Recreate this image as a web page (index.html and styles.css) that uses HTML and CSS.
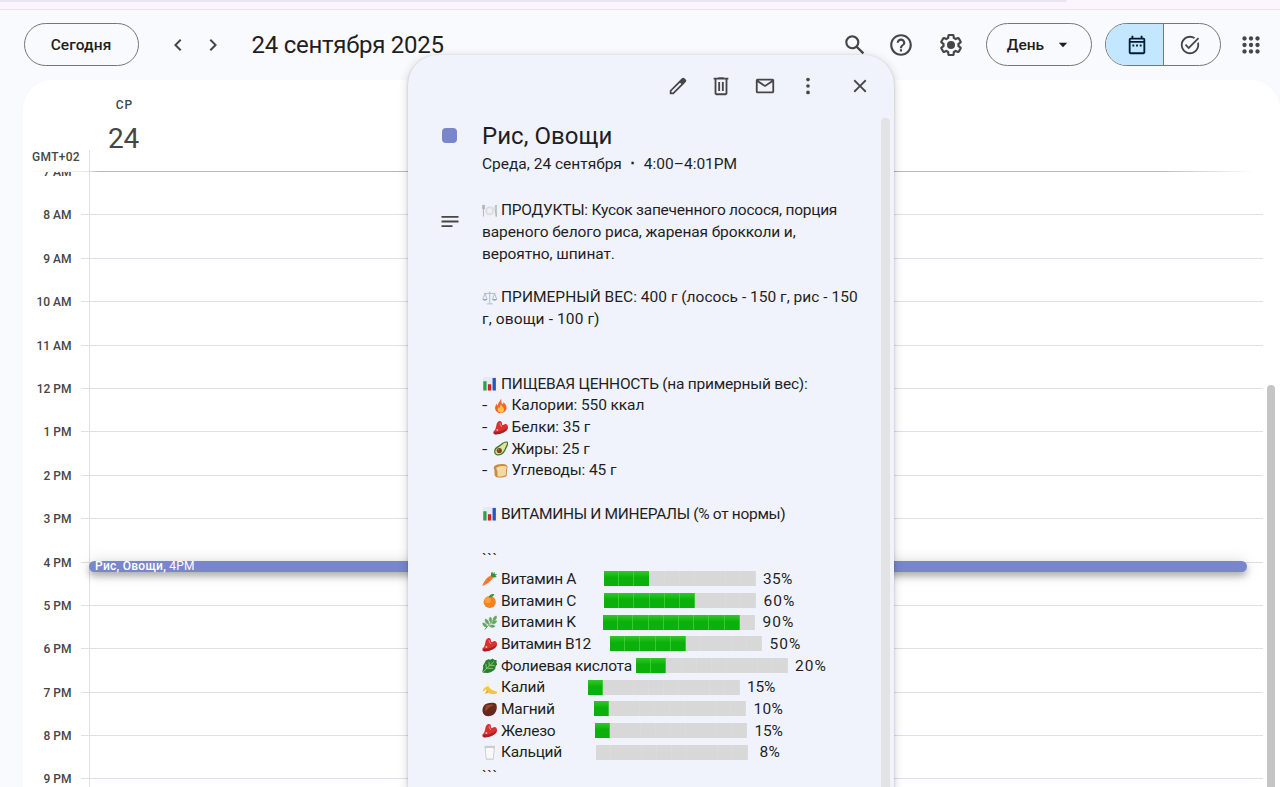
FILE: index.html
```html
<!DOCTYPE html>
<html lang="ru">
<head>
<meta charset="utf-8">
<title>24 сентября 2025</title>
<link rel="stylesheet" href="styles.css">
</head>
<body>
<svg class="defs" aria-hidden="true">
  <symbol id="plate" viewBox="0 0 16 16"><circle cx="8" cy="8" r="5" fill="#e1e3e6"/><circle cx="8" cy="8" r="3.2" fill="#eef0f2" stroke="#ccd0d4" stroke-width=".6"/><path d="M1.5 2v12M.7 2v4h1.800V2M14.700 14V2c-1.300 1-1.600 4-.8 6z" fill="none" stroke="#a9adb0" stroke-width=".9"/></symbol>
  <symbol id="scales" viewBox="0 0 16 16"><path d="M8 1.500v12M2.500 3.500h11M5 14.300h6M3 3.500L.9 9.400M3 3.500l2.200 5.900M13 3.500l-2.200 5.900M13 3.500l2.100 5.900" fill="none" stroke="#a9b4c2" stroke-width=".9"/><path d="M.5 9.400h5c-.4 2.300-4.600 2.300-5 0zM10.500 9.400h5c-.4 2.300-4.600 2.300-5 0z" fill="#94a4b7"/></symbol>
  <symbol id="chart" viewBox="0 0 16 16"><path d="M1 1h13.500v14H1z" fill="#e5eaf0"/><path d="M1.300 5.500h3.400V15H1.300z" fill="#29a34c"/><path d="M6.100 8.500h3.400V15H6.100z" fill="#c9252b"/><path d="M10.900 2h3.400v13h-3.400z" fill="#2258bd"/></symbol>
  <symbol id="fire" viewBox="0 0 16 16"><path d="M8.300.5c.8 3-.5 4 1.700 5.700 1-.8 1-1.500.8-2.200 2.600 2.500 4 5.400 2.700 8.200-1.800 4.300-9.500 4.400-11 .1-1-3 .3-5.100 1.500-6.700.1 1.100.3 1.900 1 2.400C4.600 5 7.400 3.700 8.300.5z" fill="#f5642c"/><path d="M8.300 6c.3 2.700 3.200 3.500 3 6.300-.4 3.700-6.100 3.600-6.500.2-.1-1.700.7-2.600 1.400-3.400.3.7.6 1 1 1.200C6.700 8.500 8 7.600 8.300 6z" fill="#ffc642"/></symbol>
  <symbol id="meat" viewBox="0 0 16 16"><path d="M5.500 1.500C8 .5 9.500 1.600 9.300 5c1.500.8 2.500-1.700 4.500-.7 2.500 1.500 2 4.500.3 6.200-2.500 2.600-8.600 4.600-12 4.300-2.500-.4-2-3.300-.4-4.300C3.700 8.700 3 2.700 5.500 1.500z" fill="#d9312f"/><path d="M1 12.300c4.500.2 10-1.200 14.200-4.300-.4 4-7.400 6.900-12.700 6.900-1.300 0-1.900-1.200-1.500-2.600z" fill="#a81f25"/><path d="M6.700 3c1.200.3.7 3.300 2.500 4" fill="none" stroke="#f3a19a" stroke-width=".9"/><circle cx="4.500" cy="10.300" r="1" fill="#f0b5ab"/></symbol>
  <symbol id="avocado" viewBox="0 0 16 16"><path d="M15.200.7c1.500 2.600-.6 4.900-1.700 7.600-1.500 4.300-4.900 7.300-9.200 6.600C-.1 13.700.3 7.900 4.200 5.800 7.300 4.300 10.900-.8 15.200.7z" fill="#48762d"/><path d="M14.200 1.600c.8 1.700-.8 3.500-1.800 6-1.400 3.900-4.400 6.700-7.700 6-3.400-1-2.700-5.200.5-6.700 3.400-1.600 6-6 9-5.300z" fill="#dee59a"/><circle cx="6.500" cy="9.900" r="2.700" fill="#754722"/><circle cx="5.700" cy="9.100" r=".8" fill="#b78452"/></symbol>
  <symbol id="bread" viewBox="0 0 16 16"><path d="M1.500 3C3.500.8 11.500.2 13.800 2c1.600 1 1.400 3 .8 4l-.5 7.500c-2.500 1.500-8 2-10.500 1.200L1.700 13l-.3-6C.5 5.500.5 4 1.500 3z" fill="#c98b45"/><path d="M4.200 4.500c3-1.700 7.800-1.800 9.600-.8 1 1 .5 2-.3 2.700l-.3 6.300c-2 1-6.200 1.400-8.500 1.200L4.500 8C3.300 7 2.900 5.400 4.200 4.500z" fill="#f4d9a1"/></symbol>
  <symbol id="carrot" viewBox="0 0 16 16"><path d="M9.300 4.300c1.700.2 2.500 1.300 2.500 2.700C9 10.700 4.800 14 1 15.300.4 15.400.2 15 .5 14.500 2 10.500 5.500 6 9.300 4.300z" fill="#f37b34"/><path d="M9.500 5.500C9 3.500 9.300 1.500 10.500.5l.9 2.300L13 .8l.1 2.600 2.700-.3-2 1.900 1.500 1.300c-1.700.6-3.600.8-5.800-.8z" fill="#36913a"/><path d="M6 8.500l1.500 1.200M4 11.500l1 .7" stroke="#c85319" stroke-width=".7"/></symbol>
  <symbol id="orange" viewBox="0 0 16 16"><circle cx="8" cy="9.300" r="6.300" fill="#f48220"/><circle cx="6" cy="7.500" r="3" fill="#ffa13b"/><path d="M7 4.500C7.500 2 10 .5 12.700 1.300 12 3.500 10 4.700 7 4.500z" fill="#3f8f35"/></symbol>
  <symbol id="herb" viewBox="0 0 16 16"><path d="M3 15C5.500 11.500 9 8 13.500 3.500" fill="none" stroke="#51964b"/><path d="M14.800 1c.5 3-.7 4.500-3.200 4.600C11.400 3.200 12.300 1.600 14.800 1zM8.500 2c1.800 1.700 2 3.600.7 5.500C7 6 7 4 8.500 2zM3.400 4.200c2.700.7 3.800 2.500 3.500 5.300C4.200 9 3 7 3.400 4.200zM.8 8.200c2.800 0 4 1.600 4.200 4.200C2.500 12.400.9 10.900.8 8.200zM15.300 6.300c-1 2.400-2.800 3.200-5.300 2.200 1.200-2.200 3-2.900 5.300-2.200zM13.500 11.700c-2.100 1.600-4.300 1.300-6-.5 2-1.400 4.200-1.300 6 .5z" fill="#64a75b" stroke="#64a75b" stroke-width=".7"/></symbol>
  <symbol id="greens" viewBox="0 0 16 16"><path d="M4 2.500L6.500 1.300l2 .5L11 .5l1.500 1.200 2.700.5-.3 2.600.8 1.700-1.700 2.300-.3 2.200-2 2.200-2.700 1.600-3 .7L1 15.300.3 14l.9-3.500L1 8l1.200-2z" fill="#29812f"/><path d="M1 14.600L12.500 3.500M4.500 11L4 6M7.500 8.200L7.200 4M5.500 10.500l5.500.3M8.500 7.500l4.500.3" fill="none" stroke="#a6cf7c" stroke-width=".9"/></symbol>
  <symbol id="banana" viewBox="0 0 16 16"><path d="M4.500.7c1.500 2.800 3 4.200 4.600 5.500L7 9C4.500 6.500 3.500 4 4.500.7z" fill="#fff0c3"/><path d="M6.500 6.500c1.500 3 5 4.800 9 5.500.3 1.200-.4 2-1.500 2.300-5.200.9-9-1.500-10-4.800-1 1.300-2 2-3.400 2.200C1.500 8.800 3.500 6.500 6.500 6.500z" fill="#f4c63d"/><path d="M2 13.800c1.500-.5 2.500-1.300 3-3l1.500 1.500c-1 1.300-2.500 2-4.500 1.500z" fill="#dba62c"/></symbol>
  <symbol id="chestnut" viewBox="0 0 16 16"><path d="M4.500 1.800C8 .5 13 .3 14.600 2c1.500 3.500.5 8.500-2.600 11-3.500 2.500-8.500 2.500-10.600-.8C-.5 9 .5 3.500 4.500 1.800z" fill="#66291c"/><path d="M5 3.300c2.500-1 6-1 7.500 0-3 .7-6.500 2.700-8.500 6.500-1.300-2-.8-5.200 1-6.500z" fill="#98452d"/></symbol>
  <symbol id="milk" viewBox="0 0 16 16"><path d="M2.500.8h11L12 15.200H4z" fill="#c9ced2"/><path d="M3.800 4h8.400l-1 10H4.800z" fill="#f8f8f8"/><ellipse cx="8" cy="4" rx="4.200" ry=".9" fill="#fff"/></symbol>
</svg>

<div class="browser-edge"><div class="omnibox"></div></div>

<header class="topbar">
  <button class="pill today">Сегодня</button>
  <svg class="chev prev" viewBox="0 0 24 24"><path d="M15.410 7.410L14 6l-6 6 6 6 1.410-1.410L10.830 12z"/></svg>
  <svg class="chev" viewBox="0 0 24 24"><path d="M8.590 16.590L10 18l6-6-6-6-1.410 1.410L13.170 12z"/></svg>
  <h1 class="period">24 сентября 2025</h1>
  <div class="tools">
    <svg class="tool" viewBox="0 0 24 24"><path d="M20.490 19l-5.730-5.730C15.530 12.200 16 10.910 16 9.500A6.500 6.500 0 1 0 9.500 16c1.410 0 2.700-.47 3.770-1.240L19 20.490 20.490 19zM5 9.500C5 7.010 7.010 5 9.500 5S14 7.010 14 9.500 11.990 14 9.500 14 5 11.990 5 9.500z"/></svg>
    <svg class="tool help" viewBox="0 0 24 24"><path d="M11 18h2v-2h-2v2zm1-16C6.480 2 2 6.480 2 12s4.480 10 10 10 10-4.480 10-10S17.520 2 12 2zm0 18c-4.410 0-8-3.590-8-8s3.590-8 8-8 8 3.590 8 8-3.590 8-8 8zm0-14c-2.210 0-4 1.790-4 4h2c0-1.100.9-2 2-2s2 .9 2 2c0 2-3 1.750-3 5h2c0-2.250 3-2.500 3-5 0-2.210-1.790-4-4-4z"/></svg>
    <svg class="tool" viewBox="0 0 24 24"><path d="M13.850 22.250h-3.700c-.74 0-1.360-.54-1.450-1.270l-.27-1.890c-.27-.14-.53-.29-.79-.46l-1.800.72c-.7.26-1.470-.03-1.810-.65L2.200 15.530c-.35-.66-.2-1.440.36-1.880l1.530-1.190c-.01-.15-.02-.3-.02-.46 0-.15.010-.31.020-.46l-1.520-1.190c-.59-.45-.74-1.260-.37-1.880l1.850-3.190c.34-.62 1.110-.9 1.790-.63l1.810.73c.26-.17.52-.32.78-.46l.27-1.910c.09-.7.710-1.250 1.440-1.250h3.700c.74 0 1.360.54 1.450 1.270l.27 1.890c.27.14.53.29.79.46l1.800-.72c.71-.26 1.480.03 1.820.65l1.840 3.180c.36.66.2 1.440-.36 1.880l-1.520 1.190c.01.15.02.3.02.46s-.01.31-.02.46l1.520 1.190c.56.45.72 1.230.37 1.860l-1.860 3.220c-.34.62-1.110.9-1.800.63l-1.800-.72c-.26.17-.52.32-.78.46l-.27 1.910c-.1.680-.72 1.220-1.460 1.220zm-3.230-2h2.760l.37-2.550.53-.22c.44-.18.88-.44 1.340-.78l.45-.34 2.380.96 1.380-2.400-2.030-1.580.07-.56c.03-.26.06-.51.06-.78s-.03-.53-.06-.78l-.07-.56 2.030-1.580-1.390-2.400-2.390.96-.45-.35c-.42-.32-.87-.58-1.330-.77l-.52-.22-.37-2.550h-2.760l-.37 2.550-.53.21c-.44.19-.88.44-1.340.79l-.45.33-2.380-.95-1.390 2.390 2.030 1.580-.07.56a7 7 0 0 0-.06.790c0 .26.020.53.060.78l.07.56-2.030 1.580 1.380 2.400 2.390-.96.45.35c.43.33.86.58 1.330.77l.53.22z"/><circle cx="12" cy="12" r="3.700"/></svg>
    <button class="pill view">День<svg class="caret" viewBox="0 0 10 6"><path d="M.8.8h8.400L5 5.200z"/></svg></button>
    <div class="switch">
      <span class="seg on"><svg viewBox="0 0 24 24"><path d="M19 4h-1V2h-2v2H8V2H6v2H5a2 2 0 0 0-2 2v14c0 1.100.9 2 2 2h14c1.100 0 2-.9 2-2V6c0-1.100-.9-2-2-2zm0 16H5V9.500h14V20zm0-12.500H5V6h14v1.500zM7 11.500h2v2H7zm4 0h2v2h-2zm4 0h2v2h-2z"/></svg></span>
      <span class="seg"><svg viewBox="0 0 24 24"><path d="M22 5.180L10.590 16.600l-4.240-4.240 1.410-1.410 2.830 2.830 10-10L22 5.180zM19.790 10.220C19.920 10.790 20 11.390 20 12c0 4.420-3.580 8-8 8s-8-3.580-8-8 3.580-8 8-8c1.580 0 3.040.46 4.280 1.250l1.440-1.440A9.900 9.900 0 0 0 12 2C6.480 2 2 6.480 2 12s4.480 10 10 10 10-4.480 10-10c0-1.190-.22-2.330-.6-3.390l-1.610 1.610z"/></svg></span>
    </div>
    <svg class="tool apps" viewBox="0 0 24 24"><circle cx="6" cy="6" r="2"/><circle cx="12" cy="6" r="2"/><circle cx="18" cy="6" r="2"/><circle cx="6" cy="12" r="2"/><circle cx="12" cy="12" r="2"/><circle cx="18" cy="12" r="2"/><circle cx="6" cy="18" r="2"/><circle cx="12" cy="18" r="2"/><circle cx="18" cy="18" r="2"/></svg>
  </div>
</header>

<main class="calendar">
  <div class="dayhead">
    <div class="zone">GMT+02</div>
    <div class="day"><span class="dow">СР</span><span class="num">24</span></div>
  </div>
  <div class="hours">
    <div class="hour first"><span>7 AM</span><i></i></div>
    <div class="hour"><span>8 AM</span><i></i></div>
    <div class="hour"><span>9 AM</span><i></i></div>
    <div class="hour"><span>10 AM</span><i></i></div>
    <div class="hour"><span>11 AM</span><i></i></div>
    <div class="hour"><span>12 PM</span><i></i></div>
    <div class="hour"><span>1 PM</span><i></i></div>
    <div class="hour"><span>2 PM</span><i></i></div>
    <div class="hour"><span>3 PM</span><i></i></div>
    <div class="hour"><span>4 PM</span><i></i></div>
    <div class="hour"><span>5 PM</span><i></i></div>
    <div class="hour"><span>6 PM</span><i></i></div>
    <div class="hour"><span>7 PM</span><i></i></div>
    <div class="hour"><span>8 PM</span><i></i></div>
    <div class="hour"><span>9 PM</span><i></i></div>
    <div class="event"><b>Рис, Овощи,</b> 4PM</div>
    <div class="pagebar"></div>
  </div>
</main>

<section class="popup">
  <div class="actions">
    <svg viewBox="0 0 24 24"><path d="M20.410 4.940l-1.350-1.350a2 2 0 0 0-2.820 0L3 16.820V21h4.180l10.460-10.460 2.770-2.770a2 2 0 0 0 0-2.830zM6.410 19.060H4.940v-1.470L14.200 8.330l1.470 1.470z"/></svg>
    <svg viewBox="0 0 24 24"><path d="M15 3V2.500H9V3H4v2h1v15c0 1.100.9 2 2 2h10c1.100 0 2-.9 2-2V5h1V3zm2 17H7V5h10zM9 7.500h2v10H9zm4 0h2v10h-2z"/></svg>
    <svg viewBox="0 0 24 24"><path d="M20 4H4c-1.100 0-2 .9-2 2v12c0 1.100.9 2 2 2h16c1.100 0 2-.9 2-2V6c0-1.100-.9-2-2-2zm-.8 2L12 10.800 4.800 6zM4 18V7.870l8 5.330 8-5.330V18z"/></svg>
    <svg viewBox="0 0 24 24"><circle cx="12" cy="5" r="2"/><circle cx="12" cy="12" r="2"/><circle cx="12" cy="19" r="2"/></svg>
    <svg class="close" viewBox="0 0 24 24"><path d="M19 6.410L17.590 5 12 10.590 6.410 5 5 6.410 10.590 12 5 17.590 6.410 19 12 13.410 17.590 19 19 17.590 13.410 12z"/></svg>
  </div>
  <div class="titlerow">
    <span class="swatch"></span>
    <div>
      <h2>Рис, Овощи</h2>
      <p class="when"><span>Среда, 24 сентября</span><span class="dot">⋅</span><span>4:00–4:01PM</span></p>
    </div>
  </div>
  <div class="notes">
    <svg class="lines" viewBox="0 0 18 13"><path d="M.5 1.900h17M.5 6.500h17M.5 11.100h11"/></svg>
    <div class="text">
      <p class="l1"><svg><use href="#plate"/></svg>ПРОДУКТЫ: Кусок запеченного лосося, порция</p>
      <p class="l2">вареного белого риса, жареная брокколи и,</p>
      <p class="l2">вероятно, шпинат.</p>
      <p></p>
      <p class="l3"><svg><use href="#scales"/></svg>ПРИМЕРНЫЙ ВЕС: 400 г (лосось - 150 г, рис - 150</p>
      <p class="l6">г, овощи - 100 г)</p>
      <p></p>
      <p></p>
      <p class="l4"><svg><use href="#chart"/></svg>ПИЩЕВАЯ ЦЕННОСТЬ (на примерный вес):</p>
      <p class="item"><span>-</span><svg><use href="#fire"/></svg>Калории: 550 ккал</p>
      <p class="item"><span>-</span><svg><use href="#meat"/></svg>Белки: 35 г</p>
      <p class="item"><span>-</span><svg><use href="#avocado"/></svg>Жиры: 25 г</p>
      <p class="item"><span>-</span><svg><use href="#bread"/></svg>Углеводы: 45 г</p>
      <p></p>
      <p class="l5"><svg><use href="#chart"/></svg>ВИТАМИНЫ И МИНЕРАЛЫ (% от нормы)</p>
      <p></p>
      <p class="ticks">```</p>
      <div class="row"><span class="name" style="width:121.500px"><svg><use href="#carrot"/></svg>Витамин A</span><span class="bar"><i style="width:30%"></i></span><span class="pct">35%</span></div>
      <div class="row"><span class="name" style="width:122px"><svg><use href="#orange"/></svg>Витамин C</span><span class="bar"><i style="width:60%"></i></span><span class="pct wide">60%</span></div>
      <div class="row"><span class="name" style="width:121px"><svg><use href="#herb"/></svg>Витамин K</span><span class="bar"><i style="width:90%"></i></span><span class="pct wide">90%</span></div>
      <div class="row"><span class="name tight" style="width:128px"><svg><use href="#meat"/></svg>Витамин B12</span><span class="bar"><i style="width:50%"></i></span><span class="pct wide">50%</span></div>
      <div class="row"><span class="name" style="width:153.500px"><svg><use href="#greens"/></svg>Фолиевая кислота</span><span class="bar"><i style="width:20%"></i></span><span class="pct wide">20%</span></div>
      <div class="row"><span class="name" style="width:105.500px"><svg><use href="#banana"/></svg>Калий</span><span class="bar"><i style="width:10%"></i></span><span class="pct narrow">15%</span></div>
      <div class="row"><span class="name" style="width:112px"><svg><use href="#chestnut"/></svg>Магний</span><span class="bar"><i style="width:10%"></i></span><span class="pct">10%</span></div>
      <div class="row"><span class="name" style="width:113px"><svg><use href="#meat"/></svg>Железо</span><span class="bar"><i style="width:10%"></i></span><span class="pct narrow">15%</span></div>
      <div class="row last"><span class="name" style="width:114px"><svg><use href="#milk"/></svg>Кальций</span><span class="bar"></span><span class="pct">8%</span></div>
      <p class="ticks">```</p>
    </div>
  </div>
  <div class="popbar"></div>
</section>
</body>
</html>
```
FILE: styles.css
```css
* { box-sizing: border-box; }
body {
  margin: 0;
  height: 787px;
  overflow: hidden;
  position: relative;
  display: flex;
  flex-direction: column;
  background: #f8fafe;
  color: #1f1f1f;
  font-family: Roboto, "Noto Sans", sans-serif;
}
h1, h2, p { margin: 0; font-weight: 400; }
svg { display: block; flex: none; fill: #444746; }
.defs { position: absolute; width: 0; height: 0; }

.browser-edge { flex: none; height: 10px; background: #fcf5fd; border-bottom: 1px solid #ebe3ee; }
.omnibox { width: 1067px; height: 2px; background: #e9e6f4; border-bottom-right-radius: 8px; }

.topbar { flex: none; height: 70px; padding: 0 16px 1px 23.500px; display: flex; align-items: center; }
.pill {
  height: 43px;
  padding: 0;
  display: flex;
  align-items: center;
  justify-content: center;
  border: 1px solid #747775;
  border-radius: 22px;
  background: transparent;
  color: #1f1f1f;
  font: 500 15.500px Roboto, sans-serif;
}
.today { width: 115px; letter-spacing: 0.100px; }
.chev { width: 24px; height: 24px; margin-left: 11px; }
.prev { margin-left: 27px; }
.period { margin-left: 27px; font-size: 24px; line-height: 30px; letter-spacing: -0.260px; white-space: nowrap; }
.tools { margin-left: auto; display: flex; align-items: center; }
.tool { width: 26px; height: 26px; margin-right: 20px; }
.help { margin-right: 24px; }
.view { width: 106px; margin: 0 13px 0 2px; padding-right: 3px; }
.caret { width: 10px; height: 6px; margin-left: 14px; fill: #1f1f1f; }
.switch { width: 116px; height: 43px; display: flex; border: 1px solid #747775; border-radius: 22px; overflow: hidden; }
.seg { flex: 1; display: flex; align-items: center; justify-content: center; }
.seg svg { width: 22px; height: 22px; margin-right: 4px; }
.seg.on { flex: none; width: 58px; background: #c2e7ff; border-right: 1px solid #747775; }
.seg.on svg { fill: #001d35; margin: 0 0 0 4px; }
.apps { margin: 0 0 0 17px; }

.calendar { flex: 1; min-height: 0; margin-left: 23px; display: flex; flex-direction: column; background: #fff; border-radius: 30px 30px 0 0; }
.dayhead {
  flex: none;
  height: 92px;
  display: flex;
  align-items: flex-end;
  background: linear-gradient(to right, #fff, #e9eaec 5%, #b6b7ba 6%, #b6b7ba 90%, #fff 98%) bottom / 100% 1px no-repeat;
}
.zone { width: 67px; height: 22px; padding: 1px 9px 0 0; border-right: 1px solid #dde0e4; text-align: right; font: 500 12px/13px Roboto, sans-serif; letter-spacing: 0.300px; color: #444746; white-space: nowrap; }
.day { width: 67px; height: 92px; padding-top: 18px; display: flex; flex-direction: column; align-items: center; color: #444746; }
.dow { padding-left: 2px; font: 500 12px/14px Roboto, sans-serif; letter-spacing: 0.900px; }
.num { margin-top: 8px; font-size: 28px; line-height: 37px; letter-spacing: -0.300px; }
.hours { flex: 1; min-height: 0; position: relative; overflow: hidden; background: linear-gradient(#dde0e4, #dde0e4) 66px 0 / 1px 100% no-repeat; }
.hour { height: 43.400px; display: flex; align-items: flex-start; margin-right: 17px; }
.hour:first-child { margin-top: -1px; }
.hour span { width: 48.500px; margin-top: -6px; text-align: right; font: 500 12px/14px Roboto, sans-serif; color: #444746; }
.hour i { flex: 1; margin-left: 9.500px; border-top: 1px solid #dde1e5; }
.first i { visibility: hidden; }
.event {
  position: absolute;
  left: 66px;
  top: 389px;
  width: 1158px;
  height: 11px;
  padding-left: 6px;
  border-radius: 6px;
  background: #7986cb;
  color: #fff;
  font-size: 12px;
  line-height: 11px;
  letter-spacing: 0.150px;
  box-shadow: 0 4px 7px rgba(0, 0, 0, .28), 0 1px 16px rgba(0, 0, 0, .14);
}
.event b { font-weight: 500; letter-spacing: 0.260px; }
.pagebar { position: absolute; right: 5px; top: 213px; width: 8px; height: 500px; border-radius: 4px; background: #c5c5c5; }

.popup {
  position: absolute;
  left: 408px;
  top: 55px;
  width: 486px;
  height: 760px;
  border-radius: 30px;
  background: #f0f3fb;
  box-shadow: 0 1px 3px rgba(0, 0, 0, .2), 0 2px 8px 2px rgba(0, 0, 0, .12);
}
.actions { height: 61px; padding: 1px 23.500px 0 0; display: flex; align-items: center; justify-content: flex-end; gap: 21.500px; }
.actions svg { width: 22px; height: 22px; }
.actions .close { margin-left: 8px; }
.titlerow { height: 83px; padding-left: 34px; display: flex; }
.swatch { flex: none; width: 15px; height: 15px; margin: 12px 25px 0 0; border-radius: 4px; background: #7986cb; }
h2 { padding-top: 4px; font-size: 24px; line-height: 32px; letter-spacing: 0.050px; }
.when { padding-top: 1px; display: flex; font-size: 15.500px; line-height: 22px; white-space: nowrap; }
.dot { width: 22px; text-align: center; font-weight: 700; }
.notes { display: flex; padding-left: 33px; }
.lines { width: 18px; height: 13px; margin: 16px 23px 0 0; stroke: #444746; stroke-width: 1.800; }
.text { width: 390px; padding-top: 1.200px; font-size: 15.500px; white-space: nowrap; }
.text p, .row { height: 21.690px; line-height: 21.690px; display: flex; align-items: center; }
.text p svg, .name svg { width: 15.500px; height: 15.500px; margin: -1px 3.500px 0 0; }
.text .item { letter-spacing: -0.100px; }
.item span { width: 10.500px; transform: scaleX(1.25); transform-origin: left; }
.l1 { letter-spacing: -0.240px; }
.l2 { letter-spacing: -0.100px; }
.l3 { letter-spacing: 0.020px; }
.l4 { letter-spacing: -0.230px; }
.l5 { letter-spacing: -0.320px; }
.l6 { letter-spacing: 0.120px; }
.text .ticks { padding-top: 3px; letter-spacing: 0.500px; }
.name { display: flex; align-items: center; letter-spacing: -0.280px; }
.tight { letter-spacing: -0.450px; }
.bar {
  flex: none;
  width: 152px;
  height: 15px;
  margin: -2px 7.500px 0 0;
  background: repeating-linear-gradient(to right, #d8d8d9 0 14.400px, #dbdbdc 14.400px 15.200px);
}
.bar i { display: block; height: 15px; background: linear-gradient(rgba(80, 220, 60, .55), transparent 45%), repeating-linear-gradient(to right, #0bb00b 0 14.200px, #3bc735 14.200px 15.200px); }
.pct { letter-spacing: 0.300px; }
.wide { letter-spacing: 1px; }
.narrow { letter-spacing: -0.200px; }
.last .bar { margin-right: 11.500px; }
.popbar { position: absolute; right: 4px; top: 63px; width: 9px; bottom: 0; border-radius: 4px; background: #e1e3e4; }
```
